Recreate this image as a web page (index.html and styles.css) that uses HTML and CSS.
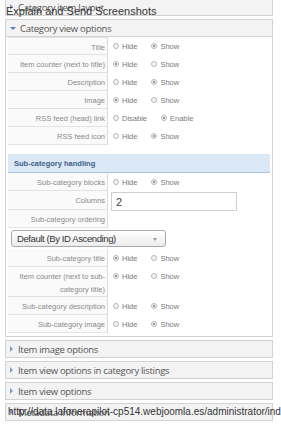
FILE: index.html
```html
<!DOCTYPE html>
<html>
<head>
    <title>Category options</title>
    <link rel="stylesheet" href="styles.css">
</head>
<body>
    <div class="page">
        <div class="tip">Explain and Send Screenshots</div>

        <div class="panel first">
            <div class="panel-head"><span class="arrow"></span>Category item layout</div>
        </div>

        <div class="panel open">
            <div class="panel-head"><span class="arrow down"></span>Category view options</div>
            <div class="panel-body">
                <div class="row">
                    <div class="lbl">Title</div>
                    <div class="opts"><span class="radio"></span>Hide<span class="radio on"></span>Show</div>
                </div>
                <div class="row">
                    <div class="lbl">Item counter (next to title)</div>
                    <div class="opts"><span class="radio on"></span>Hide<span class="radio"></span>Show</div>
                </div>
                <div class="row">
                    <div class="lbl">Description</div>
                    <div class="opts"><span class="radio"></span>Hide<span class="radio on"></span>Show</div>
                </div>
                <div class="row">
                    <div class="lbl">Image</div>
                    <div class="opts"><span class="radio on"></span>Hide<span class="radio"></span>Show</div>
                </div>
                <div class="row">
                    <div class="lbl">RSS feed (head) link</div>
                    <div class="opts"><span class="radio"></span>Disable<span class="radio on"></span>Enable</div>
                </div>
                <div class="row">
                    <div class="lbl">RSS feed icon</div>
                    <div class="opts"><span class="radio"></span>Hide<span class="radio on"></span>Show</div>
                </div>

                <div class="subhead">Sub-category handling</div>

                <div class="row">
                    <div class="lbl">Sub-category blocks</div>
                    <div class="opts"><span class="radio"></span>Hide<span class="radio on"></span>Show</div>
                </div>
                <div class="row tall">
                    <div class="lbl">Columns</div>
                    <div class="opts"><input class="text-input" type="text" value="2"></div>
                </div>
                <div class="row">
                    <div class="lbl">Sub-category ordering</div>
                    <div class="opts"></div>
                </div>
                <div class="select-row">
                    <div class="select">Default (By ID Ascending)<span class="caret"></span></div>
                </div>
                <div class="row">
                    <div class="lbl">Sub-category title</div>
                    <div class="opts"><span class="radio on"></span>Hide<span class="radio"></span>Show</div>
                </div>
                <div class="row double">
                    <div class="lbl">Item counter (next to sub-category title)</div>
                    <div class="opts"><span class="radio on"></span>Hide<span class="radio"></span>Show</div>
                </div>
                <div class="row">
                    <div class="lbl">Sub-category description</div>
                    <div class="opts"><span class="radio"></span>Hide<span class="radio on"></span>Show</div>
                </div>
                <div class="row">
                    <div class="lbl">Sub-category image</div>
                    <div class="opts"><span class="radio"></span>Hide<span class="radio on"></span>Show</div>
                </div>
            </div>
        </div>

        <div class="panel">
            <div class="panel-head"><span class="arrow"></span>Item image options</div>
        </div>
        <div class="panel">
            <div class="panel-head"><span class="arrow"></span>Item view options in category listings</div>
        </div>
        <div class="panel">
            <div class="panel-head"><span class="arrow"></span>Item view options</div>
        </div>
        <div class="panel">
            <div class="panel-head"><span class="arrow"></span>Metadata Information</div>
            <div class="status">http://data.lafonerapilot-cp514.webjoomla.es/administrator/ind</div>
        </div>
    </div>
</body>
</html>
```

FILE: styles.css
```css
* {
    box-sizing: border-box;
}
body {
    margin: 0;
    width: 281px;
    height: 427px;
    overflow: hidden;
    background: #fff;
    font-family: "Liberation Sans", Arial, sans-serif;
    color: #555;
}
.page {
    position: relative;
}
.tip {
    position: absolute;
    left: 6px;
    top: 7px;
    font-size: 11px;
    color: #333;
    z-index: 2;
}
.panel {
    position: relative;
    width: 268px;
    margin: 3px 0 0 5px;
}
.panel.first {
    margin-top: -2px;
}
.panel-head {
    height: 18px;
    padding-left: 4px;
    display: flex;
    align-items: center;
    background: #f3f3f3;
    border: 1px solid #d2d2d2;
    font-family: "Open Sans", sans-serif;
    font-size: 9.5px;
    letter-spacing: -0.3px;
    color: #555;
    white-space: nowrap;
    overflow: hidden;
}
.arrow {
    width: 0;
    height: 0;
    margin-right: 5px;
    border-left: 3px solid #7f9dbd;
    border-top: 3px solid transparent;
    border-bottom: 3px solid transparent;
}
.arrow.down {
    border-left: 3px solid transparent;
    border-right: 3px solid transparent;
    border-top: 3px solid #4f84bd;
    border-bottom: none;
    margin-right: 4px;
}
.panel-body {
    border: 1px solid #d2d2d2;
    border-top: none;
    padding: 0 2px 3px 2px;
}
.row {
    display: flex;
    height: 18px;
}
.row.tall {
    height: 19px;
}
.row.double {
    height: 30px;
}
.lbl {
    width: 100px;
    flex-shrink: 0;
    padding: 3px 2px 0 4px;
    text-align: right;
    font-size: 7.5px;
    line-height: 13px;
    color: #8a8a8a;
    background: #fafafa;
    border-bottom: 1px solid #e3e3e3;
    border-right: 1px solid #dcdcdc;
}
.row:first-child .lbl {
    border-top: 1px solid #e3e3e3;
}
.opts {
    display: flex;
    align-items: flex-start;
    padding: 3px 0 0 5px;
    font-size: 7.5px;
    line-height: 13px;
    color: #7a7a7a;
}
.radio {
    width: 6px;
    height: 6px;
    margin: 3px 3px 0 0;
    border: 1px solid #b8b8b8;
    border-radius: 50%;
    background: #f4f4f4;
    position: relative;
}
.opts .radio:nth-of-type(2) {
    margin-left: 14px;
}
.radio.on::after {
    content: "";
    position: absolute;
    left: 1px;
    top: 1px;
    width: 2px;
    height: 2px;
    border-radius: 50%;
    background: #777;
}
.subhead {
    margin-top: 9px;
    height: 19px;
    padding-left: 6px;
    display: flex;
    align-items: center;
    background: #dbe8f6;
    border-bottom: 1px solid #a8c4e0;
    font-size: 7.5px;
    font-weight: bold;
    color: #3d5f84;
}
.row.tall .opts {
    padding: 1px 0 0 3px;
}
.text-input {
    width: 126px;
    height: 19px;
    border: 1px solid #cfcfcf;
    padding: 0 4px;
    font-family: "Liberation Sans", Arial, sans-serif;
    font-size: 11px;
    color: #444;
    background: #fff;
}
.select-row {
    padding: 2px 0 2px 3px;
}
.select {
    position: relative;
    width: 155px;
    height: 17px;
    padding-left: 5px;
    border: 1px solid #aaa;
    border-radius: 3px;
    background: linear-gradient(#ffffff, #ececec);
    font-size: 9.5px;
    letter-spacing: -0.4px;
    line-height: 15px;
    color: #333;
}
.caret {
    position: absolute;
    right: 8px;
    top: 7px;
    border-left: 2px solid transparent;
    border-right: 2px solid transparent;
    border-top: 3px solid #999;
}
.status {
    position: absolute;
    left: 3px;
    top: 2px;
    width: 273px;
    overflow: hidden;
    font-size: 10px;
    line-height: 14px;
    color: #333;
    white-space: nowrap;
}
```
